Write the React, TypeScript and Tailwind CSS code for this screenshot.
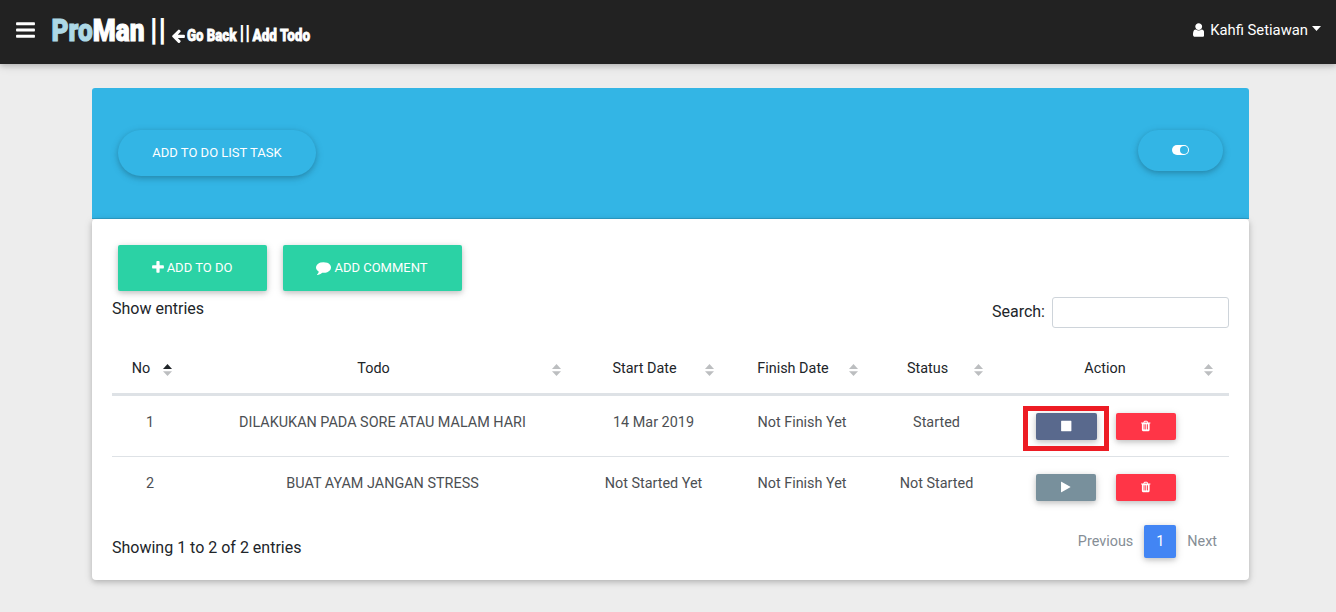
import type { ReactNode } from "react";

const ICONS = {
  bars: [1536, "M1536 1344v128q0 26-19 45t-45 19h-1408q-26 0-45-19t-19-45v-128q0-26 19-45t45-19h1408q26 0 45 19t19 45zm0-512v128q0 26-19 45t-45 19h-1408q-26 0-45-19t-19-45v-128q0-26 19-45t45-19h1408q26 0 45 19t19 45zm0-512v128q0 26-19 45t-45 19h-1408q-26 0-45-19t-19-45v-128q0-26 19-45t45-19h1408q26 0 45 19t19 45z"],
  user: [1280, "M1280 1399q0 109-62.5 187t-150.5 78h-854q-88 0-150.5-78t-62.5-187q0-85 8.5-160.5t31.5-152 58.5-131 94-89 134.5-34.5q131 128 313 128t313-128q76 0 134.5 34.5t94 89 58.5 131 31.5 152 8.5 160.5zm-256-887q0 159-112.5 271.5t-271.5 112.5-271.5-112.5-112.5-271.5 112.5-271.5 271.5-112.5 271.5 112.5 112.5 271.5z"],
  comment: [1792, "M1792 896q0 174-120 321.5t-326 233-450 85.5q-70 0-145-8-198 175-460 242-49 14-114 22-17 2-30.5-9t-17.5-29v-1q-3-4-.5-12t2-10 4.5-9.5l6-9 7-8.5 8-9q7-8 31-34.5t34.5-38 31-39.5 32.5-51 27-59 26-76q-157-89-247.5-220t-90.5-281q0-130 71-248.5t191-204.5 286-136.5 348-50.5q244 0 450 85.5t326 233 120 321.5z"],
  plus: [1408, "M1408 736v192q0 40-28 68t-68 28h-416v416q0 40-28 68t-68 28h-192q-40 0-68-28t-28-68v-416h-416q-40 0-68-28t-28-68v-192q0-40 28-68t68-28h416v-416q0-40 28-68t68-28h192q40 0 68 28t28 68v416h416q40 0 68 28t28 68z"],
  trash: [1408, "M512 1376v-704q0-14-9-23t-23-9h-64q-14 0-23 9t-9 23v704q0 14 9 23t23 9h64q14 0 23-9t9-23zm256 0v-704q0-14-9-23t-23-9h-64q-14 0-23 9t-9 23v704q0 14 9 23t23 9h64q14 0 23-9t9-23zm256 0v-704q0-14-9-23t-23-9h-64q-14 0-23 9t-9 23v704q0 14 9 23t23 9h64q14 0 23-9t9-23zm-544-992h448l-48-117q-7-9-17-11h-317q-10 2-17 11zm928 32v64q0 14-9 23t-23 9h-96v948q0 83-47 143.5t-113 60.5h-832q-66 0-113-58.5t-47-141.5v-952h-96q-14 0-23-9t-9-23v-64q0-14 9-23t23-9h309l70-167q15-37 54-63t79-26h320q40 0 79 26t54 63l70 167h309q14 0 23 9t9 23z"],
  arrow: [1536, "M1536 896v128q0 53-32.5 90.5t-84.5 37.5h-704l293 294q38 36 38 90t-38 90l-75 76q-37 37-90 37-52 0-91-37l-651-652q-37-37-37-90 0-52 37-91l651-650q38-38 91-38 52 0 90 38l75 74q38 38 38 91t-38 91l-293 293h704q52 0 84.5 37.5t32.5 90.5z"],
  stop: [1536, "M1536 192v1408q0 26-19 45t-45 19h-1408q-26 0-45-19t-19-45v-1408q0-26 19-45t45-19h1408q26 0 45 19t19 45z"],
  play: [1408, "M1384 927l-1328 738q-23 13-39.500 3t-16.500-36v-1472q0-26 16.500-36t39.500 3l1328 738q23 13 23 31t-23 31z"],
} as const;

function Icon({ name, className }: { name: keyof typeof ICONS; className: string }) {
  const [w, d] = ICONS[name];
  return (
    <svg viewBox={`0 0 ${w} 1792`} className={`shrink-0 fill-current ${className}`} aria-hidden="true">
      <path d={d} />
    </svg>
  );
}

function Sort({ active = false }: { active?: boolean }) {
  return (
    <svg viewBox="0 0 9 12" className="absolute right-4 top-[21px] h-3 w-[9px]" aria-hidden="true">
      <path d="M4.500 0L9 5H0z" className={active ? "fill-[#212529]" : "fill-[#bcbec0]"} />
      <path d="M0 7.200H9L4.500 12z" className="fill-[#bcbec0]" />
    </svg>
  );
}

function Brand() {
  return (
    <svg
      width="272"
      height="36"
      viewBox="50 12 272 36"
      className="mb-1 ml-[15px] shrink-0 overflow-visible fill-white stroke-white font-['Roboto'] font-black"
    >
      <text x="51.500" y="41" fontSize="32" strokeWidth="1.1" textLength="93" lengthAdjust="spacingAndGlyphs">
        <tspan className="fill-[#add8e6] stroke-[#add8e6]">Pro</tspan>
        <tspan>Man</tspan>
      </text>
      <text x="149.500" y="39.500" fontSize="32" textLength="17" lengthAdjust="spacingAndGlyphs" strokeWidth="0">||</text>
      <svg x="171.500" y="28" width="13.500" height="15.500" viewBox="0 0 1536 1792" stroke="none">
        <path d={ICONS.arrow[1]} />
      </svg>
      <g fontSize="17" strokeWidth="0.800">
        <text x="187" y="41" textLength="49.500" lengthAdjust="spacingAndGlyphs">Go Back</text>
        <text x="239" y="40" fontSize="21" textLength="11.500" lengthAdjust="spacingAndGlyphs" strokeWidth="0">||</text>
        <text x="252.500" y="41" textLength="57.500" lengthAdjust="spacingAndGlyphs">Add Todo</text>
      </g>
    </svg>
  );
}

const shadow = "shadow-[0_2px_5px_0_rgba(0,0,0,0.16),0_2px_10px_0_rgba(0,0,0,0.12)]";
const columns = "grid grid-cols-[76px_389px_153px_144px_125px_230px]";

function SmallButton({ className, children }: { className: string; children: ReactNode }) {
  return (
    <button className={`flex h-[27px] items-center justify-center rounded-[2px] pb-px text-white ${shadow} ${className}`}>
      {children}
    </button>
  );
}

const headings = ["No", "Todo", "Start Date", "Finish Date", "Status", "Action"];
const rows = [
  { cells: ["1", "DILAKUKAN PADA SORE ATAU MALAM HARI", "14 Mar 2019", "Not Finish Yet", "Started"], running: true },
  { cells: ["2", "BUAT AYAM JANGAN STRESS", "Not Started Yet", "Not Finish Yet", "Not Started"], running: false },
];

export default function App() {
  return (
    <div className="h-[612px] overflow-hidden bg-[#ededed] font-['Roboto',sans-serif] text-base font-normal text-[#212529]">
      <nav className={`relative flex h-16 items-center bg-[#222] pl-4 pr-[15px] text-white ${shadow}`}>
        <Icon name="bars" className="mb-1 h-[22px] w-[19px]" />
        <Brand />
        <div className="mb-1 ml-auto flex items-center">
          <Icon name="user" className="mb-px h-4 w-[11.400px]" />
          <span className="ml-[6px] text-[14.800px]">Kahfi Setiawan</span>
          <svg viewBox="0 0 9 5" className="mb-1 ml-1 h-[5px] w-[9px] fill-white" aria-hidden="true">
            <path d="M0 0h9L4.500 5z" />
          </svg>
        </div>
      </nav>

      <main className="ml-[92px] mt-6 w-[1157px]">
        <header className="flex h-[131px] items-start justify-between rounded-t-[3px] border-b border-[#2d9fca] bg-[#33b5e5] px-[26px] pt-[41px] text-white">
          <button className={`mt-px h-[46px] w-[198px] rounded-full pb-px text-[13px] font-normal ${shadow}`}>ADD TO DO LIST TASK</button>
          <button className={`mt-px flex h-[41px] w-[85px] items-center justify-center rounded-full pb-px ${shadow}`}>
            <svg viewBox="0 0 17 10" className="h-[10px] w-[17px]" aria-hidden="true">
              <rect width="17" height="10" rx="5" fill="white" />
              <circle cx="12" cy="5" r="4" fill="#33b5e5" />
            </svg>
          </button>
        </header>

        <section className={`h-[361px] rounded bg-white px-5 pt-[26px] ${shadow}`}>
          <div className="flex gap-4 pl-[6px] text-[13px] font-normal text-white">
            <button className={`flex h-[46px] w-[149px] items-center justify-center gap-[3px] rounded-[2px] bg-[#2bd2a5] pr-px ${shadow}`}>
              <Icon name="plus" className="mb-[2px] h-[15px] w-3" />
              ADD TO DO
            </button>
            <button className={`flex h-[46px] w-[179px] items-center justify-center gap-[3px] rounded-[2px] bg-[#2bd2a5] pr-px ${shadow}`}>
              <Icon name="comment" className="mb-px h-[15px] w-[15px]" />
              ADD COMMENT
            </button>
          </div>

          <div className="flex h-[52px] items-start justify-between">
            <span className="mt-[6px] leading-6">Show entries</span>
            <label className="mt-[6px] flex items-center gap-[7px]">
              <span className="pb-[2px]">Search:</span>
              <input className="h-[31px] w-[177px] rounded-[3px] border border-[#ced4da] bg-white px-2 text-sm outline-none" />
            </label>
          </div>

          <div className="text-[14.400px]">
            <div className={`${columns} h-[53px] border-b-[3px] border-[#dee2e6]`}>
              {headings.map((heading, i) => (
                <div key={heading} className="relative pr-[18px] pt-[15px] text-center leading-[22px]">
                  {heading}
                  <Sort active={i === 0} />
                </div>
              ))}
            </div>
            {rows.map((row) => (
              <div
                key={row.cells[0]}
                className={`${columns} text-[#4c4f53] ${row.running ? "h-[61px] border-b border-[#dee2e6]" : "h-[60px]"}`}
              >
                {row.cells.map((cell, i) => (
                  <div key={i} className="pt-4 text-center leading-[22px]">{cell}</div>
                ))}
                <div className="relative flex items-start pl-[37px] pt-[17px]">
                  {row.running ? (
                    <>
                      <SmallButton className="w-[61px] bg-[#59698d]">
                        <Icon name="stop" className="h-[12px] w-[10.500px]" />
                      </SmallButton>
                      <div className="pointer-events-none absolute left-6 top-[10px] h-[45px] w-[86px] border-[5px] border-[#ed1c24]" />
                      <SmallButton className="ml-[19px] w-[60px] bg-[#ff3547]">
                        <Icon name="trash" className="h-[12px] w-[9.500px]" />
                      </SmallButton>
                    </>
                  ) : (
                    <>
                      <SmallButton className="w-[60px] bg-[#78909c]">
                        <Icon name="play" className="h-[12px] w-[9.500px]" />
                      </SmallButton>
                      <SmallButton className="ml-5 w-[60px] bg-[#ff3547]">
                        <Icon name="trash" className="h-[12px] w-[9.500px]" />
                      </SmallButton>
                    </>
                  )}
                </div>
              </div>
            ))}
          </div>

          <div className="mt-2 flex items-start justify-between">
            <span className="mt-[11px] leading-6">Showing 1 to 2 of 2 entries</span>
            <div className="flex items-center pr-3 text-[14.400px] text-[#868e96]">
              Previous
              <span className={`mx-[11px] flex h-[33px] w-8 items-center justify-center rounded-[2px] bg-[#4285f4] text-white ${shadow}`}>1</span>
              Next
            </div>
          </div>
        </section>
      </main>
    </div>
  );
}
